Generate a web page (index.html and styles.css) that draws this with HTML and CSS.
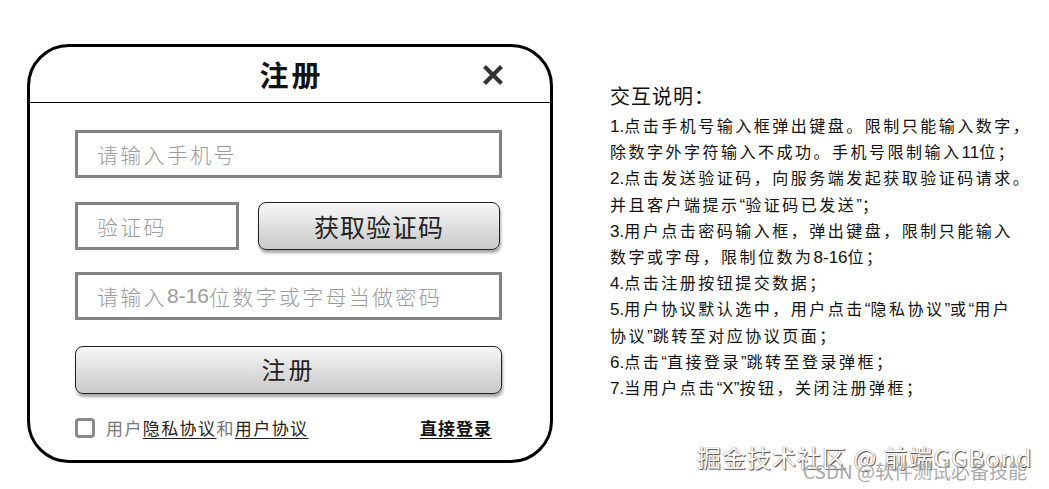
FILE: index.html
```html
<!DOCTYPE html>
<html lang="zh">
<head>
<meta charset="utf-8">
<title>注册</title>
<link rel="stylesheet" href="styles.css">
</head>
<body>
<div class="page">
  <div class="modal">
    <div class="modal-head">
      <span class="spacer"></span>
      <h1 class="title">注册</h1>
      <span class="close">
        <svg width="20" height="20" viewBox="0 0 20 20"><path d="M3 3 L17 17 M17 3 L3 17" stroke="#333" stroke-width="4.2" stroke-linecap="square"/></svg>
      </span>
    </div>
    <div class="modal-body">
      <div class="field">请输入手机号</div>
      <div class="code-row">
        <div class="field field-code">验证码</div>
        <div class="btn btn-code">获取验证码</div>
      </div>
      <div class="field">请输入<span class="num">8-16</span>位数字或字母当做密码</div>
      <div class="btn btn-submit">注册</div>
      <div class="foot">
        <div class="agree"><span class="checkbox"></span><span class="agree-text">用户<u>隐私协议</u>和<u>用户协议</u></span></div>
        <a class="login">直接登录</a>
      </div>
    </div>
  </div>
  <div class="notes">
    <div class="notes-title">交互说明：</div>
    <p><span class="n">1.</span>点击手机号输入框弹出键盘。限制只能输入数字，</p>
    <p>除数字外字符输入不成功。手机号限制输入<span class="n">11</span>位；</p>
    <p><span class="n">2.</span>点击发送验证码，向服务端发起获取验证码请求。</p>
    <p>并且客户端提示<span class="n">“</span>验证码已发送<span class="n">”</span>；</p>
    <p><span class="n">3.</span>用户点击密码输入框，弹出键盘，限制只能输入</p>
    <p>数字或字母，限制位数为<span class="n">8-16</span>位；</p>
    <p><span class="n">4.</span>点击注册按钮提交数据；</p>
    <p><span class="n">5.</span>用户协议默认选中，用户点击<span class="n">“</span>隐私协议<span class="n">”</span>或<span class="n">“</span>用户</p>
    <p>协议<span class="n">”</span>跳转至对应协议页面；</p>
    <p><span class="n">6.</span>点击<span class="n">“</span>直接登录<span class="n">”</span>跳转至登录弹框；</p>
    <p><span class="n">7.</span>当用户点击<span class="n">“X”</span>按钮，关闭注册弹框；</p>
  </div>
</div>
<div class="watermark">
  <div class="wm1">掘金技术社区 @ 前端GGBond</div>
  <div class="wm2">CSDN @软件测试必备技能</div>
</div>
</body>
</html>
```
FILE: styles.css
```css
html, body {
  margin: 0;
  padding: 0;
  background: #fff;
}
body {
  width: 1049px;
  height: 489px;
  overflow: hidden;
  position: relative;
  font-family: "Noto Sans CJK SC", sans-serif;
}
.page {
  display: flex;
  align-items: flex-start;
  padding: 44px 0 0 27px;
}
.modal {
  box-sizing: border-box;
  width: 526px;
  height: 419px;
  border: 3px solid #000;
  border-radius: 42px;
  display: flex;
  flex-direction: column;
}
.modal-head {
  height: 55px;
  border-bottom: 1.5px solid #000;
  display: grid;
  grid-template-columns: 1fr auto 1fr;
  align-items: center;
}
.title {
  margin: 0;
  font-size: 29px;
  font-weight: 700;
  letter-spacing: 3px;
  color: #111;
  line-height: 1;
  padding-left: 3px;
}
.close {
  justify-self: end;
  margin-right: 47px;
  display: flex;
  padding-top: 1px;
}
.modal-body {
  padding: 27px 0 0 45px;
  display: flex;
  flex-direction: column;
}
.field {
  box-sizing: border-box;
  width: 427px;
  height: 48px;
  border: 3px solid #838383;
  padding-left: 19px;
  display: flex;
  align-items: center;
  font-size: 21px;
  letter-spacing: 2.3px;
  color: #9b9b9b;
  font-weight: 300;
}
.num {
  font-family: "Liberation Sans", sans-serif;
  font-weight: 400;
  letter-spacing: 0;
}
.code-row {
  display: flex;
  gap: 19px;
  margin: 24px 0 22px;
}
.field-code {
  width: 164px;
}
.btn {
  box-sizing: border-box;
  height: 48px;
  border: 1.5px solid #222;
  border-radius: 8px;
  background: linear-gradient(#f6f6f6, #c9c9c9);
  box-shadow: 1px 3px 3px rgba(0,0,0,0.35);
  display: flex;
  align-items: center;
  justify-content: center;
  color: #222;
}
.btn-code {
  width: 242px;
  font-size: 25px;
  letter-spacing: 1px;
}
.btn-submit {
  width: 427px;
  margin-top: 26px;
  font-size: 24px;
  letter-spacing: 3px;
  padding-bottom: 3px;
}
.foot {
  display: flex;
  justify-content: space-between;
  align-items: center;
  width: 417px;
  margin-top: 21px;
}
.agree {
  display: flex;
  align-items: center;
}
.checkbox {
  box-sizing: border-box;
  width: 20px;
  height: 20px;
  border: 3px solid #888;
  border-radius: 4px;
  margin-right: 11px;
}
.agree-text {
  font-size: 17px;
  letter-spacing: 1.4px;
  color: #777;
}
.agree-text u {
  color: #222;
  text-decoration-thickness: 1px;
  text-underline-offset: 3px;
}
.login {
  font-size: 17px;
  font-weight: 700;
  color: #111;
  text-decoration: underline;
  text-underline-offset: 3px;
  letter-spacing: 1px;
}
.notes {
  margin-left: 57px;
  padding-top: 38px;
  color: #111;
}
.notes-title {
  font-size: 20px;
  letter-spacing: 1px;
  height: 30px;
  line-height: 28px;
}
.notes p {
  margin: 0;
  font-size: 16px;
  letter-spacing: 2.5px;
  height: 26.2px;
  line-height: 26px;
  white-space: nowrap;
}
.notes .n {
  font-family: "Liberation Sans", sans-serif;
  font-size: 17px;
  letter-spacing: 0;
  line-height: 1;
}
.watermark {
  position: absolute;
  left: 697px;
  top: 442px;
}
.wm1 {
  font-size: 24px;
  color: #fff;
  letter-spacing: 1px;
  text-shadow: 1px 1px 1px #444, -0.5px -0.5px 0 #999;
  white-space: nowrap;
  line-height: 30px;
}
.wm2 {
  position: absolute;
  left: 106px;
  top: 18px;
  font-size: 19px;
  color: #aaa;
  white-space: nowrap;
  line-height: 22px;
}
```
